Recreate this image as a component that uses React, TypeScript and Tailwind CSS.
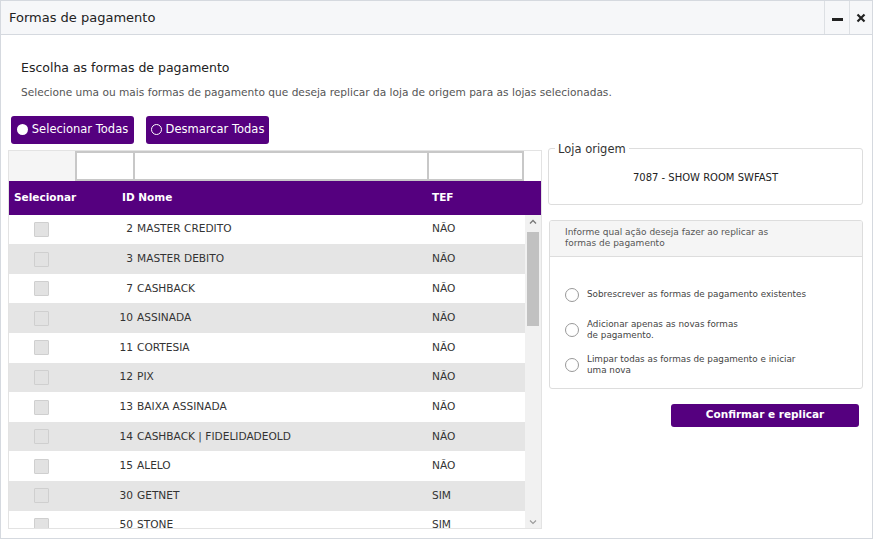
import React from 'react'

const rows = [
  { id: 2, nome: 'MASTER CREDITO', tef: 'NÃO' },
  { id: 3, nome: 'MASTER DEBITO', tef: 'NÃO' },
  { id: 7, nome: 'CASHBACK', tef: 'NÃO' },
  { id: 10, nome: 'ASSINADA', tef: 'NÃO' },
  { id: 11, nome: 'CORTESIA', tef: 'NÃO' },
  { id: 12, nome: 'PIX', tef: 'NÃO' },
  { id: 13, nome: 'BAIXA ASSINADA', tef: 'NÃO' },
  { id: 14, nome: 'CASHBACK | FIDELIDADEOLD', tef: 'NÃO' },
  { id: 15, nome: 'ALELO', tef: 'NÃO' },
  { id: 30, nome: 'GETNET', tef: 'SIM' },
  { id: 50, nome: 'STONE', tef: 'SIM' },
]

const opcoes = [
  'Sobrescrever as formas de pagamento existentes',
  'Adicionar apenas as novas formas\nde pagamento.',
  'Limpar todas as formas de pagamento e iniciar\numa nova',
]

export default function App() {
  return (
    <div
      className="w-[873px] h-[539px] bg-white text-[#333] overflow-hidden"
      style={{ fontFamily: '"DejaVu Sans", sans-serif' }}
    >
      <div className="h-full border border-[#d5d9df] flex flex-col">
        {/* Title bar */}
        <div className="h-[34px] shrink-0 bg-[#f6f7f9] border-b border-[#d5d9df] flex items-center">
          <span className="pl-2 text-[13px] text-[#222] flex-1">Formas de pagamento</span>
          <div className="h-full w-[25px] border-l border-[#dde0e4] flex items-end justify-center pb-[13px]">
            <div className="w-[11px] h-[3px] bg-[#222]" />
          </div>
          <div className="h-full w-[23px] border-l border-[#dde0e4] flex items-center justify-center text-[#222]">
            <svg width="10" height="10" viewBox="0 0 10 10">
              <path d="M1.5 1.5 L8.5 8.5 M8.5 1.5 L1.5 8.5" stroke="#222" strokeWidth="2.2" />
            </svg>
          </div>
        </div>

        {/* Body */}
        <div className="flex-1 flex flex-col pl-[7px] pr-[9px]">
          <div className="pl-[13px] pt-[24px] text-[12.5px] text-[#222]">Escolha as formas de pagamento</div>
          <div className="pl-[13px] pt-[7px] text-[10.6px] text-[#555]">
            Selecione uma ou mais formas de pagamento que deseja replicar da loja de origem para as lojas selecionadas.
          </div>

          <div className="flex gap-3 pl-[3px] mt-[15px]">
            <button className="h-[28px] w-[123px] rounded-[3px] bg-[#55007f] text-white text-[11.5px] flex items-center justify-center gap-[4px]">
              <span className="w-[11px] h-[11px] rounded-full bg-white" />
              Selecionar Todas
            </button>
            <button className="h-[28px] w-[123px] rounded-[3px] bg-[#55007f] text-white text-[11.5px] flex items-center justify-center gap-[4px]">
              <span className="w-[11px] h-[11px] rounded-full border-[1.5px] border-white" />
              Desmarcar Todas
            </button>
          </div>

          <div className="flex mt-[6px] gap-[6px]">
            {/* Table */}
            <div className="w-[534px] h-[379px] border border-[#e3e3e3] flex flex-col">
              <div className="h-[30px] flex bg-white shrink-0">
                <div className="w-[66px] bg-[#f5f5f5]" />
                <div className="w-[58px] border-2 border-[#c8c8c8] border-r-0" />
                <div className="w-[296px] border-2 border-[#c8c8c8]" />
                <div className="w-[95px] border-2 border-[#c8c8c8] border-l-0" />
              </div>
              <div className="h-[34px] bg-[#55007f] text-white font-bold text-[10.5px] flex items-center shrink-0">
                <span className="w-[113px] pl-[5px]">Selecionar</span>
                <span className="w-[310px]">ID Nome</span>
                <span>TEF</span>
              </div>
              <div className="flex-1 flex overflow-hidden">
                <div className="w-[516px] overflow-hidden">
                  {rows.map((r, i) => (
                    <div
                      key={r.id}
                      className={`h-[29.6px] flex items-center text-[10.6px] text-[#333] ${i % 2 ? 'bg-[#e5e5e5]' : 'bg-white'}`}
                    >
                      <div className="w-[109px] pl-[25px]">
                        <div className="w-[15px] h-[15px] bg-[#e2e2e2] border border-[#cfcfcf] rounded-[1px]" />
                      </div>
                      <span className="w-[15px] text-right">{r.id}</span>
                      <span className="w-[299px] pl-[4px]">{r.nome}</span>
                      <span>{r.tef}</span>
                    </div>
                  ))}
                </div>
                <div className="w-[16px] ml-auto bg-[#f1f1f1] flex flex-col items-center">
                  <svg width="8" height="6" viewBox="0 0 8 6" className="mt-[4px]">
                    <path d="M1 4.5 L4 1.5 L7 4.5" stroke="#777" strokeWidth="1.3" fill="none" />
                  </svg>
                  <div className="w-[12px] h-[94px] bg-[#c1c1c1] mt-[7px]" />
                  <div className="flex-1" />
                  <svg width="8" height="6" viewBox="0 0 8 6" className="mb-[3px]">
                    <path d="M1 1.5 L4 4.5 L7 1.5" stroke="#999" strokeWidth="1.1" fill="none" />
                  </svg>
                </div>
              </div>
            </div>

            {/* Right column */}
            <div className="flex-1 flex flex-col">
              <div className="relative h-[57px] mt-[-2px] border border-[#ddd] rounded-[3px] flex items-center justify-center text-[10px] text-[#222]">
                <span className="absolute left-[6px] top-[-8px] bg-white px-[3px] text-[11.5px] text-[#333]">Loja origem</span>
                <span className="pt-[3px]">7087 - SHOW ROOM SWFAST</span>
              </div>

              <div className="mt-[15px] ml-[1px] h-[169px] border border-[#ddd] rounded-[3px] flex flex-col overflow-hidden">
                <div className="h-[36px] bg-[#f5f5f5] border-b border-[#ddd] pl-[15px] pt-[6px] text-[9px] leading-[11px] text-[#555]">
                  Informe qual ação deseja fazer ao replicar as
                  <br />
                  formas de pagamento
                </div>
                <div className="flex flex-col pl-[15px] pt-[27px] gap-[13px]">
                  {opcoes.map((o) => (
                    <div key={o} className="flex items-center gap-[8px] h-[22px]">
                      <span className="w-[14px] h-[14px] rounded-full border border-[#999] bg-white shrink-0" />
                      <span className="text-[8.8px] leading-[11px] text-[#444] whitespace-pre-line">{o}</span>
                    </div>
                  ))}
                </div>
              </div>

              <div className="flex justify-end mt-[15px] pr-[4px]">
                <button className="w-[188px] h-[23px] rounded-[3px] bg-[#55007f] text-white text-[10.5px] font-semibold">
                  Confirmar e replicar
                </button>
              </div>
            </div>
          </div>
        </div>
      </div>
    </div>
  )
}
